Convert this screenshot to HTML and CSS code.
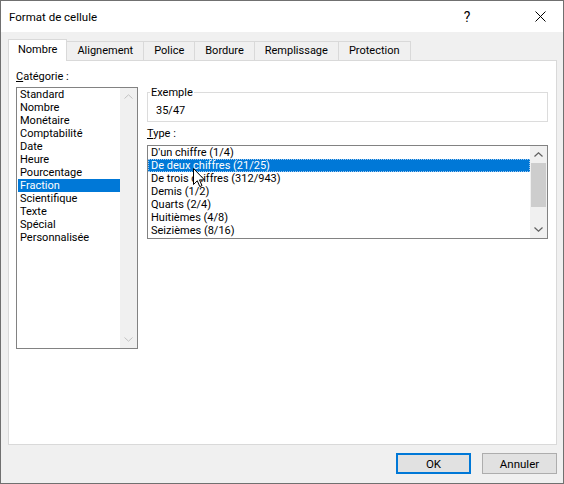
FILE: index.html
```html
<!DOCTYPE html>
<html lang="fr">
<head>
<meta charset="utf-8">
<title>Format de cellule</title>
<link rel="stylesheet" href="styles.css">
</head>
<body>
<div class="window">
  <div class="titlebar">
    <span class="title">Format de cellule</span>
    <span class="tb-btn help">?</span>
    <span class="tb-btn close">
      <svg width="11" height="11" viewBox="0 0 11 11"><path d="M0.5 0.5 L10.5 10.5 M10.5 0.5 L0.5 10.5" stroke="#000" stroke-width="1" fill="none"/></svg>
    </span>
  </div>
  <div class="content">
    <div class="tabs">
      <div class="tab active">Nombre</div>
      <div class="tab">Alignement</div>
      <div class="tab">Police</div>
      <div class="tab">Bordure</div>
      <div class="tab">Remplissage</div>
      <div class="tab">Protection</div>
    </div>
    <div class="pane">
      <div class="col-left">
        <div class="label"><u>C</u>atégorie :</div>
        <div class="listbox cat-list">
          <ul class="items">
            <li>Standard</li>
            <li>Nombre</li>
            <li>Monétaire</li>
            <li>Comptabilité</li>
            <li>Date</li>
            <li>Heure</li>
            <li>Pourcentage</li>
            <li class="selected">Fraction</li>
            <li>Scientifique</li>
            <li>Texte</li>
            <li>Spécial</li>
            <li>Personnalisée</li>
          </ul>
          <div class="scrollbar disabled">
            <div class="sb-arrow"><svg width="9" height="5" viewBox="0 0 9 5"><path d="M0.5 4.5 L4.5 0.8 L8.5 4.5" fill="none" stroke="currentColor" stroke-width="1"/></svg></div>
            <div class="sb-track"></div>
            <div class="sb-arrow"><svg width="9" height="5" viewBox="0 0 9 5"><path d="M0.5 0.5 L4.5 4.2 L8.5 0.5" fill="none" stroke="currentColor" stroke-width="1"/></svg></div>
          </div>
        </div>
      </div>
      <div class="col-right">
        <fieldset class="group">
          <legend>Exemple</legend>
          <div class="sample">35/47</div>
        </fieldset>
        <div class="label type-label"><u>T</u>ype :</div>
        <div class="listbox type-list">
          <ul class="items">
            <li>D'un chiffre (1/4)</li>
            <li class="selected focus">De deux chiffres (21/25)</li>
            <li>De trois chiffres (312/943)</li>
            <li>Demis (1/2)</li>
            <li>Quarts (2/4)</li>
            <li>Huitièmes (4/8)</li>
            <li>Seizièmes (8/16)</li>
          </ul>
          <div class="scrollbar">
            <div class="sb-arrow"><svg width="9" height="5" viewBox="0 0 9 5"><path d="M0.5 4.5 L4.5 0.8 L8.5 4.5" fill="none" stroke="currentColor" stroke-width="1.2"/></svg></div>
            <div class="sb-track"><div class="sb-thumb"></div></div>
            <div class="sb-arrow"><svg width="9" height="5" viewBox="0 0 9 5"><path d="M0.5 0.5 L4.5 4.2 L8.5 0.5" fill="none" stroke="currentColor" stroke-width="1.2"/></svg></div>
          </div>
          <svg class="cursor" width="13" height="20" viewBox="0 0 13 20"><path d="M0.5 0.5 L0.5 16.5 L4.3 12.8 L6.8 18.6 L9 17.6 L6.5 11.9 L11.5 11.9 Z" fill="#fff" stroke="#000" stroke-width="1" stroke-linejoin="miter"/></svg>
        </div>
      </div>
    </div>
    <div class="buttons">
      <button class="btn default">OK</button>
      <button class="btn">Annuler</button>
    </div>
  </div>
</div>
</body>
</html>
```
FILE: styles.css
```css
* { box-sizing: border-box; }
html, body { margin: 0; padding: 0; }
body {
  width: 564px;
  height: 484px;
  overflow: hidden;
  font-family: Roboto, "Noto Sans", sans-serif;
  font-size: 11px;
  color: #000;
  background: #fff;
}
.window {
  width: 564px;
  height: 484px;
  border: 1px solid #707070;
  background: #f0f0f0;
  display: flex;
  flex-direction: column;
}
.titlebar {
  height: 31px;
  flex-shrink: 0;
  background: #fff;
  display: flex;
  align-items: center;
}
.title {
  flex: 1;
  padding-left: 8px;
  font-size: 11.5px;
}
.tb-btn {
  width: 46px;
  height: 31px;
  display: flex;
  align-items: center;
  justify-content: center;
}
.help {
  font-size: 14px;
  margin-right: 27px;
}
.close { width: 46px; }
.content {
  flex: 1;
  display: flex;
  flex-direction: column;
  padding: 7px 6px 0 7px;
}
.tabs {
  display: flex;
  align-items: flex-end;
  height: 21px;
  position: relative;
  z-index: 1;
}
.tab {
  height: 19px;
  line-height: 17px;
  padding: 0 10px;
  border: 1px solid #d9d9d9;
  border-bottom: none;
  border-left: none;
  background: #f0f0f0;
  text-align: center;
}
.tab.active {
  height: 22px;
  line-height: 20px;
  margin-bottom: -1px;
  padding: 0 9px;
  background: #fff;
  border-left: 1px solid #d9d9d9;
}
.pane {
  height: 385px;
  border: 1px solid #d9d9d9;
  background: #fff;
  padding: 9px 8px 0 7px;
  display: flex;
  gap: 9px;
}
.col-left {
  width: 122px;
  display: flex;
  flex-direction: column;
}
.col-right {
  flex: 1;
  display: flex;
  flex-direction: column;
}
.label {
  line-height: 13px;
  height: 13px;
  margin-bottom: 4px;
}
.listbox {
  border: 1px solid #828282;
  background: #fff;
  display: flex;
  position: relative;
}
.cat-list {
  height: 262px;
  padding-left: 1px;
}
.items {
  list-style: none;
  margin: 0;
  padding: 0;
  flex: 1;
}
.items li {
  height: 13px;
  line-height: 13px;
  padding-left: 2px;
  white-space: nowrap;
}
.items li.selected {
  background: #0078d7;
  color: #fff;
}
.type-list .items li { padding-left: 3px; }
.items li.focus {
  outline: 1px dotted #9fc7ee;
  outline-offset: -1px;
}
.scrollbar {
  width: 17px;
  background: #f0f0f0;
  display: flex;
  flex-direction: column;
  color: #606060;
}
.scrollbar.disabled { color: #c2c2c2; }
.sb-arrow {
  height: 17px;
  display: flex;
  align-items: center;
  justify-content: center;
}
.sb-track {
  flex: 1;
  display: flex;
  flex-direction: column;
}
.sb-thumb {
  height: 44px;
  background: #cdcdcd;
  margin: 0 1px;
}
.group {
  margin: 16px 0 0 0;
  padding: 5px 0 4px 2px;
  border: 1px solid #dcdcdc;
  min-width: 0;
}
.group legend {
  padding: 0 1px;
  line-height: 13px;
}
.sample {
  line-height: 13px;
  padding-left: 6px;
}
.type-label {
  margin-top: 5px;
  margin-bottom: 5px;
}
.type-list {
  height: 94px;
}
.cursor {
  position: absolute;
  left: 45px;
  top: 22px;
}
.buttons {
  display: flex;
  justify-content: flex-end;
  gap: 11px;
  margin-top: 8px;
}
.btn {
  width: 75px;
  height: 21px;
  font-family: inherit;
  font-size: 11.5px;
  color: #000;
  background: #e1e1e1;
  border: 1px solid #adadad;
  padding: 0;
  margin: 0;
}
.btn.default {
  border: 2px solid #0078d7;
}
```
